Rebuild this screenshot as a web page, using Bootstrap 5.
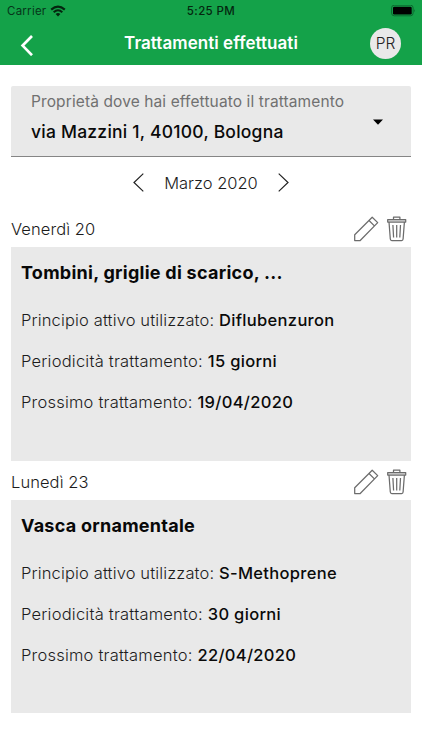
<!DOCTYPE html>
<html lang="it">
<head>
<meta charset="utf-8">
<meta name="viewport" content="width=device-width, initial-scale=1">
<title>Trattamenti effettuati</title>
<link href="https://cdn.jsdelivr.net/npm/bootstrap@5.3.0/dist/css/bootstrap.min.css" rel="stylesheet">
<style>
body{font-family:Inter,"Liberation Sans",sans-serif;font-size:16.5px;font-weight:300;color:#1c1c1c;line-height:20px;overflow:hidden}
svg{display:block;flex:none}
.app-head{background:#14a249;height:65px}
.status-bar{height:22px;font-size:11.5px;line-height:22px;color:#06351a;padding:0 6px 0 7px}
.status-bar .carrier{font-weight:400;letter-spacing:.25px}
.status-bar .clock{font-weight:500;color:#04260f;letter-spacing:.4px;margin-left:-1px}
.title-bar{height:43px;padding:0 20px}
.page-title{font-size:17px;font-weight:600;line-height:20px;letter-spacing:.05px;padding-bottom:1px}
.avatar{width:31px;height:31px;background:#e9e9e9;color:#222;font-size:15.5px;font-weight:300;margin-right:1px;padding-top:1px}
.side{width:62px}
.back{margin-top:2px}
.field{height:71px;margin:21px 11px 0;background:#e9e9e9;border-bottom:1px solid #858585;border-radius:2px 2px 0 0;padding:6px 28px 0 20px}
.field-label{font-size:15.5px;font-weight:400;color:#707070;letter-spacing:.11px}
.field-value{font-size:17.5px;font-weight:500;color:#0a0a0a;margin-top:10px;letter-spacing:.23px}
.month-row{height:51px}
.day-row{height:39px;padding:3px 15px 0 11px}
.day-name{letter-spacing:.08px}
.entry{height:214px;margin:0 11px;background:#e9e9e9;padding:16px 10px 0}
.entry + .day-row + .entry{height:213px}
.entry h2{font-size:18px;font-weight:700;color:#080808;line-height:20px;letter-spacing:.26px;margin:0 0 27px}
.entry p{margin:0 0 21px;height:20px;white-space:nowrap;letter-spacing:.22px}
.entry p.agent{letter-spacing:.14px}
.entry b{font-weight:500;color:#0a0a0a;letter-spacing:.32px}
</style>
</head>
<body class="bg-white">
<header class="app-head">
  <div class="status-bar row g-0">
    <div class="col d-flex align-items-center gap-1">
      <span class="carrier">Carrier</span>
      <svg width="16" height="12" viewBox="0 0 16 12" fill="none" stroke="#04260f" stroke-width="2.1"><path d="M1.2 4.6Q8-1.5 14.8 4.6M3.7 7.2Q8 3.3 12.3 7.2"/><path d="M8 11.4 5.6 9Q8 7 10.4 9Z" fill="#04260f" stroke="none"/></svg>
    </div>
    <div class="col-auto clock">5:25 PM</div>
    <div class="col d-flex justify-content-end align-items-center">
      <svg width="25" height="12" viewBox="0 0 25 12"><rect x=".6" y=".2" width="21.5" height="10.6" rx="2.6" fill="none" stroke="#0b6830"/><rect x="2" y="1.7" width="18.7" height="7.8" rx="1.2" fill="#000"/><path d="M23.2 3.9q1.6 1.7 0 3.4z" fill="#0b6830"/></svg>
    </div>
  </div>
  <div class="title-bar d-flex align-items-center justify-content-between">
    <div class="side"><svg class="back" width="14" height="22" viewBox="0 0 14 22" fill="none" stroke="#fff" stroke-width="2.7"><path d="M12 2 2.6 11.6 12 21.2"/></svg></div>
    <h1 class="page-title text-white mb-0">Trattamenti effettuati</h1>
    <div class="side d-flex justify-content-end"><div class="avatar rounded-circle d-flex align-items-center justify-content-center">PR</div></div>
  </div>
</header>
<main>
  <div class="field d-flex justify-content-between align-items-start">
    <div>
      <div class="field-label">Proprietà dove hai effettuato il trattamento</div>
      <div class="field-value">via Mazzini 1, 40100, Bologna</div>
    </div>
    <svg class="mt-4" width="10" height="12" viewBox="0 0 10 12"><path d="M0 3.5h10L5 8.8z" fill="#000"/></svg>
  </div>
  <div class="month-row d-flex align-items-center justify-content-center">
    <svg width="11" height="19" viewBox="0 0 11 19" fill="none" stroke="#222" stroke-width="1.2"><path d="M10.3.6 1 9.5l9.3 8.9"/></svg>
    <span class="month-name mx-3 px-1">Marzo 2020</span>
    <svg width="11" height="19" viewBox="0 0 11 19" fill="none" stroke="#222" stroke-width="1.2"><path d="M.7.6 10 9.5.7 18.4"/></svg>
  </div>
  <div class="day-row d-flex align-items-center justify-content-between">
    <span class="day-name">Venerdì 20</span>
    <div class="d-flex gap-2">
      <svg width="25" height="26" viewBox="0 0 25 26" fill="none" stroke="#6c6c6c" stroke-width="1.25" stroke-linejoin="round"><path d="M.7 24.5V18.8L18.2 1.2l5.5 5.4L6.2 24.5ZM15 4.5l5.4 5.4"/></svg>
      <svg width="20" height="26" viewBox="0 0 20 26" fill="none" stroke="#6c6c6c" stroke-width="1.25" stroke-linejoin="round"><path d="M.7 3.5h18V6h-18Z" fill="#ddd"/><path d="M6.5 3.5V1.2h6.4v2.3M2 6l1.3 17q.1 1.5 1.5 1.5h9.8q1.4 0 1.5-1.5L17.4 6M5.9 9l.7 12.5M9.7 9v12.5M13.5 9l-.7 12.5"/></svg>
    </div>
  </div>
  <section class="entry">
    <h2>Tombini, griglie di scarico, ...</h2>
    <p class="agent">Principio attivo utilizzato: <b>Diflubenzuron</b></p>
    <p>Periodicità trattamento: <b>15 giorni</b></p>
    <p>Prossimo trattamento: <b>19/04/2020</b></p>
  </section>
  <div class="day-row d-flex align-items-center justify-content-between">
    <span class="day-name">Lunedì 23</span>
    <div class="d-flex gap-2">
      <svg width="25" height="26" viewBox="0 0 25 26" fill="none" stroke="#6c6c6c" stroke-width="1.25" stroke-linejoin="round"><path d="M.7 24.5V18.8L18.2 1.2l5.5 5.4L6.2 24.5ZM15 4.5l5.4 5.4"/></svg>
      <svg width="20" height="26" viewBox="0 0 20 26" fill="none" stroke="#6c6c6c" stroke-width="1.25" stroke-linejoin="round"><path d="M.7 3.5h18V6h-18Z" fill="#ddd"/><path d="M6.5 3.5V1.2h6.4v2.3M2 6l1.3 17q.1 1.5 1.5 1.5h9.8q1.4 0 1.5-1.5L17.4 6M5.9 9l.7 12.5M9.7 9v12.5M13.5 9l-.7 12.5"/></svg>
    </div>
  </div>
  <section class="entry">
    <h2>Vasca ornamentale</h2>
    <p class="agent">Principio attivo utilizzato: <b>S-Methoprene</b></p>
    <p>Periodicità trattamento: <b>30 giorni</b></p>
    <p>Prossimo trattamento: <b>22/04/2020</b></p>
  </section>
</main>
<script src="https://cdn.jsdelivr.net/npm/bootstrap@5.3.0/dist/js/bootstrap.bundle.min.js"></script>
</body>
</html>
